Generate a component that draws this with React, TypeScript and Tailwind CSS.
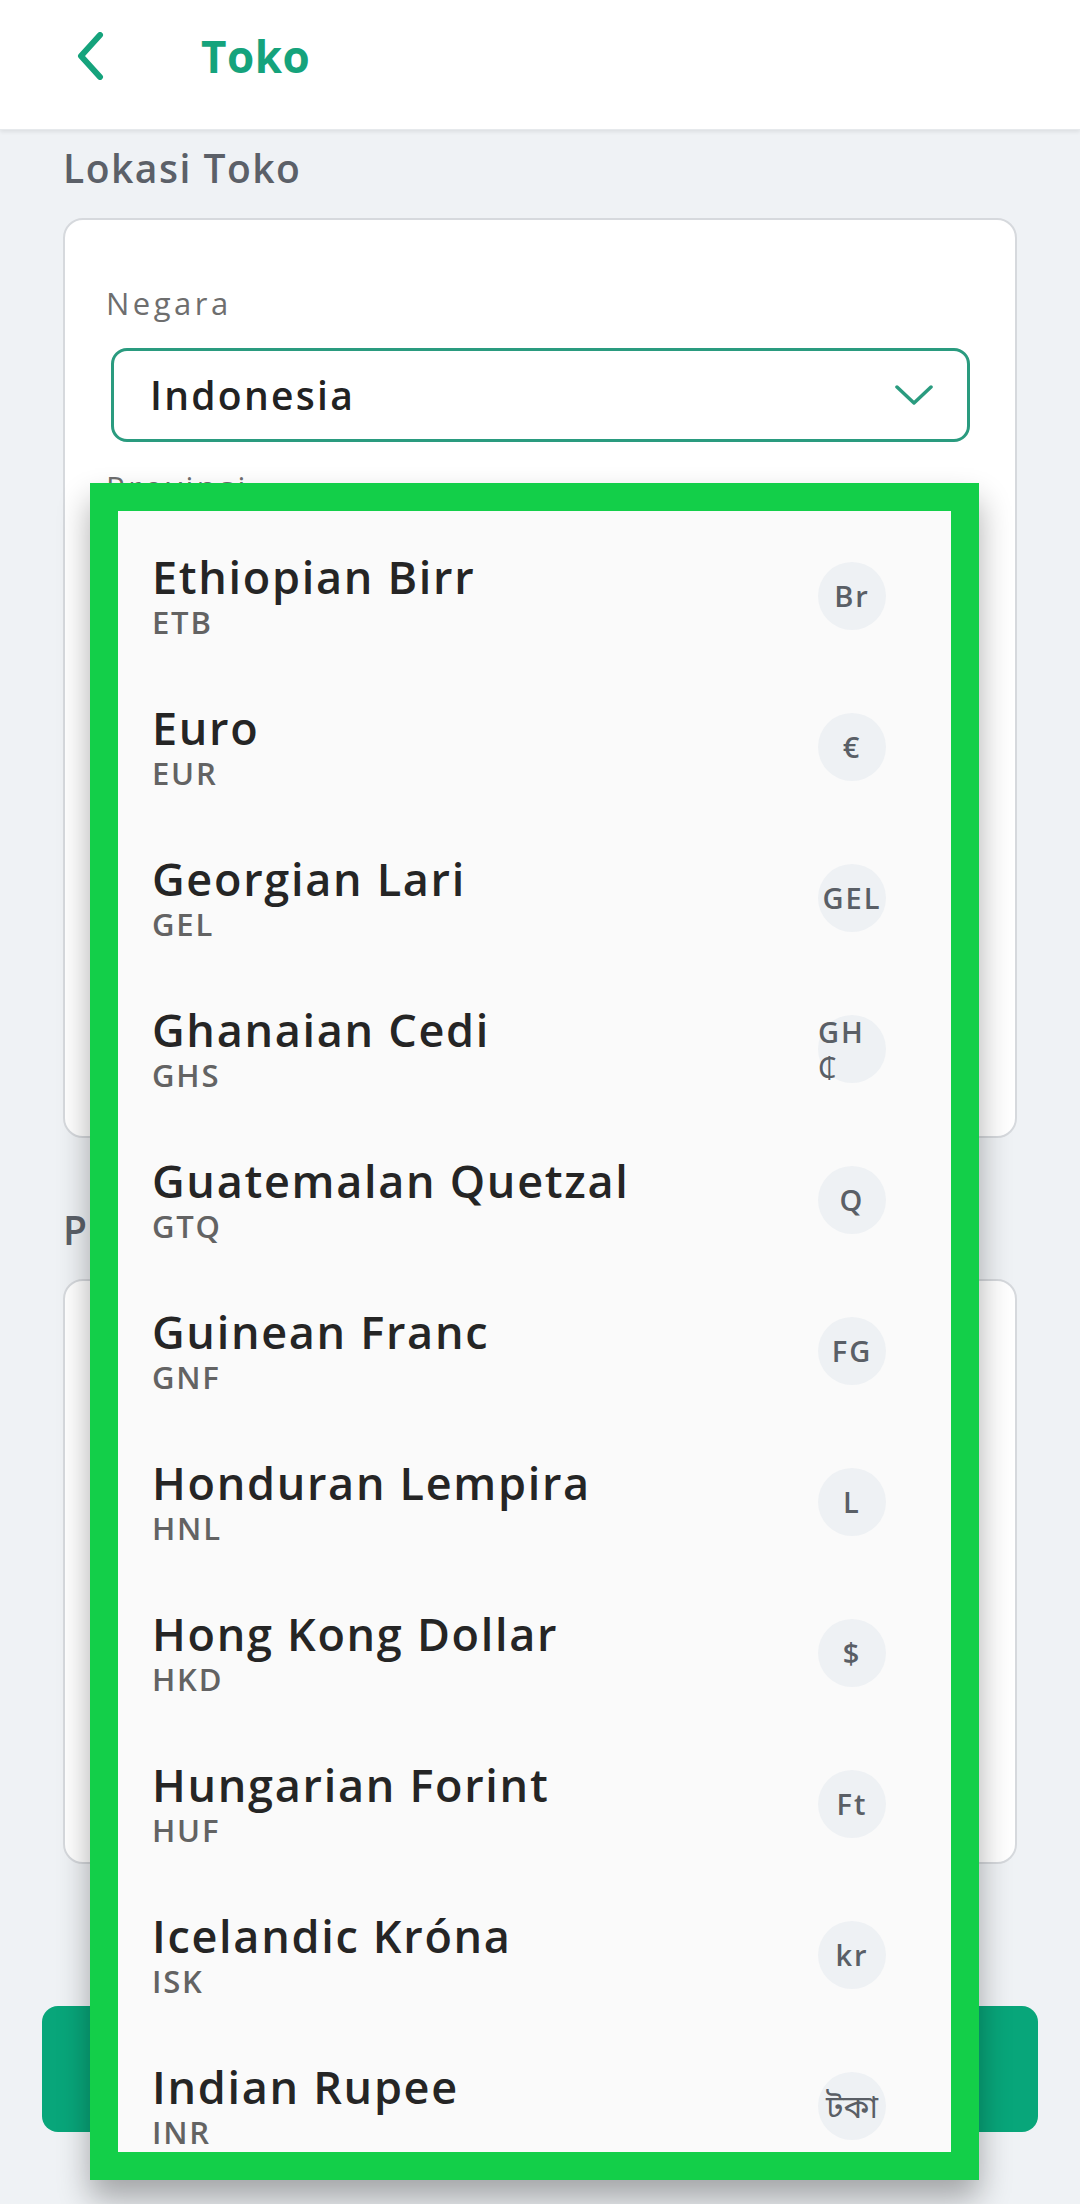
import React from "react";

const items: { name: string; code: string; sym: string }[] = [
  { name: "Ethiopian Birr", code: "ETB", sym: "Br" },
  { name: "Euro", code: "EUR", sym: "€" },
  { name: "Georgian Lari", code: "GEL", sym: "GEL" },
  { name: "Ghanaian Cedi", code: "GHS", sym: "GH₵" },
  { name: "Guatemalan Quetzal", code: "GTQ", sym: "Q" },
  { name: "Guinean Franc", code: "GNF", sym: "FG" },
  { name: "Honduran Lempira", code: "HNL", sym: "L" },
  { name: "Hong Kong Dollar", code: "HKD", sym: "$" },
  { name: "Hungarian Forint", code: "HUF", sym: "Ft" },
  { name: "Icelandic Króna", code: "ISK", sym: "kr" },
  { name: "Indian Rupee", code: "INR", sym: "টকা" },
];

function Symbol({ sym }: { sym: string }) {
  if (sym === "GH₵") {
    return (
      <div className="w-[68px] text-left leading-[35px] whitespace-nowrap">
        GH
        <br />
        <span className="font-normal">₵</span>
      </div>
    );
  }
  if (sym === "টকা") {
    return <span className="whitespace-nowrap font-normal text-[32px] tracking-normal">{sym}</span>;
  }
  return <span className="whitespace-nowrap">{sym}</span>;
}

export default function App() {
  return (
    <div className="relative w-[1080px] h-[2204px] overflow-hidden bg-[#eff2f5] font-['Open_Sans','Noto_Sans','Noto_Sans_Bengali','DejaVu_Sans',sans-serif]">
      {/* Header */}
      <header className="relative z-10 h-[130px] bg-white shadow-[0_2px_4px_rgba(0,0,0,0.08)] border-b border-[#e6e9ec]">
        <div className="h-[112px] flex items-center">
          <svg className="ml-[76px] w-[28px] h-[48px]" viewBox="0 0 28 48" fill="none">
            <path d="M24 3 L5 24 L24 45" stroke="#15a37c" strokeWidth="6" strokeLinecap="round" strokeLinejoin="round" />
          </svg>
          <span className="ml-[97px] text-[44px] leading-[44px] font-bold text-[#15a37c] tracking-[0.5px]">Toko</span>
        </div>
      </header>

      {/* Content */}
      <div className="px-[63px]">
        <div className="mt-[18px] text-[39px] leading-[39px] font-semibold text-[#5b6068] tracking-[1.5px]">Lokasi Toko</div>

        <div className="mt-[31px] h-[920px] rounded-[20px] border-2 border-[#d6d9dd] bg-white pt-[68px] pl-[41px] pr-[43px]">
          <div className="text-[31px] leading-[31px] text-[#6e6e6e] tracking-[3.5px]">Negara</div>
          <div className="mt-[29px] ml-[5px] w-[859px] h-[94px] rounded-[16px] border-[3px] border-[#2a9b7f] flex items-center justify-between pl-[36px] pr-[34px]">
            <span className="text-[39px] font-semibold text-[#222222] tracking-[2.3px]">Indonesia</span>
            <svg className="w-[38px] h-[21px]" viewBox="0 0 38 21" fill="none">
              <path d="M2 2 L19 18 L36 2" stroke="#2a9b7f" strokeWidth="3.5" strokeLinecap="round" strokeLinejoin="round" />
            </svg>
          </div>
          <div className="mt-[30px] text-[31px] leading-[31px] text-[#6e6e6e] tracking-[3.5px]">Provinsi</div>
          <div className="mt-[28px] ml-[5px] w-[859px] h-[94px] rounded-[16px] border-2 border-[#d6d9dd]" />
          <div className="mt-[40px] text-[31px] leading-[31px] text-[#6e6e6e] tracking-[3.5px]">Kota</div>
          <div className="mt-[28px] ml-[5px] w-[859px] h-[94px] rounded-[16px] border-2 border-[#d6d9dd]" />
        </div>

        <div className="mt-[72px] text-[39px] leading-[39px] font-semibold text-[#5b6068] tracking-[1.5px]">Pengaturan Mata Uang</div>
        <div className="mt-[30px] h-[585px] rounded-[20px] border-2 border-[#d6d9dd] bg-white" />
      </div>

      <div className="px-[42px] mt-[142px]">
        <div className="h-[126px] rounded-[16px] bg-[#08a67a] flex items-center justify-center text-[39px] font-semibold text-white">Simpan</div>
      </div>

      {/* Dropdown overlay */}
      <div className="absolute left-[90px] top-[483px] w-[889px] h-[1697px] border-[28px] border-[#13cf49] bg-[#fafafa] shadow-[0_18px_30px_rgba(0,0,0,0.32)] overflow-hidden">
        <div className="pt-[9px]">
          {items.map((it) => (
            <div key={it.code} className="h-[151px] flex items-center justify-between pl-[34px] pr-[65px]">
              <div className="flex flex-col">
                <span className="text-[45px] leading-[50px] font-semibold text-[#252525] tracking-[1.7px]">{it.name}</span>
                <span className="mt-[2px] text-[31px] leading-[36px] font-semibold text-[#636363] tracking-[1.8px]">{it.code}</span>
              </div>
              <div className="w-[68px] h-[68px] rounded-full bg-[#eef1f4] flex items-center justify-center text-[29px] font-semibold text-[#5a5f66] tracking-[2px]">
                <Symbol sym={it.sym} />
              </div>
            </div>
          ))}
        </div>
      </div>
    </div>
  );
}
